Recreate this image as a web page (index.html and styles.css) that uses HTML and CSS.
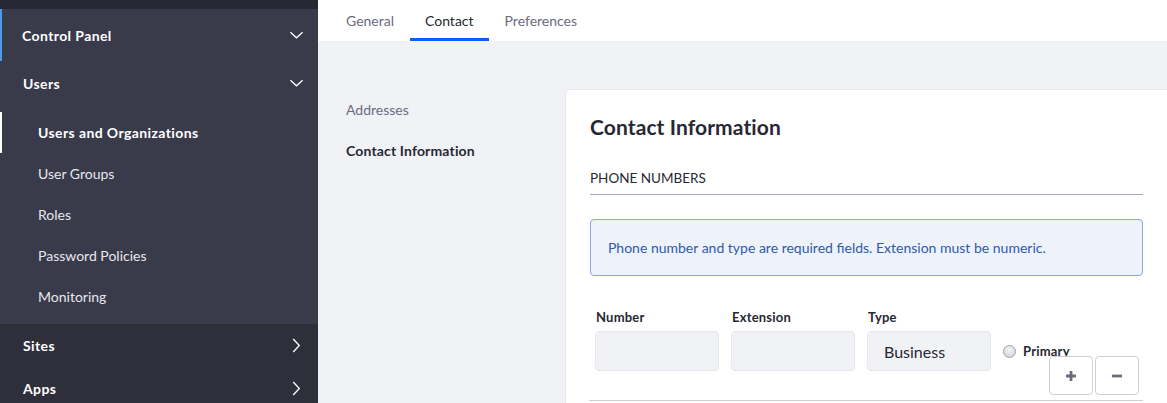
FILE: index.html
```html
<!DOCTYPE html>
<html lang="en">
<head>
<meta charset="utf-8">
<title>Contact</title>
<link rel="stylesheet" href="styles.css">
</head>
<body>
<aside class="sidebar">
  <div class="topstrip"></div>
  <div class="panel">
    <div class="row row-main active-blue"><span>Control Panel</span>
      <svg class="chev" viewBox="0 0 16 16"><polyline points="1.5,4.5 8,10.5 14.5,4.5"/></svg></div>
    <div class="row row-sec"><span>Users</span>
      <svg class="chev" viewBox="0 0 16 16"><polyline points="1.5,4.5 8,10.5 14.5,4.5"/></svg></div>
    <ul class="sublist">
      <li class="sub active">Users and Organizations</li>
      <li class="sub">User Groups</li>
      <li class="sub">Roles</li>
      <li class="sub">Password Policies</li>
      <li class="sub">Monitoring</li>
    </ul>
  </div>
  <div class="row row-sec dark"><span>Sites</span>
    <svg class="chev-r" viewBox="0 0 16 16"><polyline points="4.5,1 11,8 4.5,15"/></svg></div>
  <div class="row row-sec dark"><span>Apps</span>
    <svg class="chev-r" viewBox="0 0 16 16"><polyline points="4.5,1 11,8 4.5,15"/></svg></div>
</aside>
<main class="main">
  <nav class="tabs">
    <a class="tab">General</a>
    <a class="tab active">Contact</a>
    <a class="tab">Preferences</a>
  </nav>
  <div class="content">
    <ul class="sidenav">
      <li class="nav-item">Addresses</li>
      <li class="nav-item current">Contact Information</li>
    </ul>
    <section class="card">
      <h2 class="card-title">Contact Information</h2>
      <div class="legend">PHONE NUMBERS</div>
      <div class="alert">Phone number and type are required fields. Extension must be numeric.</div>
      <div class="phone-row">
        <div class="field">
          <label class="label">Number</label>
          <div class="input"></div>
        </div>
        <div class="field">
          <label class="label">Extension</label>
          <div class="input"></div>
        </div>
        <div class="field">
          <label class="label">Type</label>
          <div class="input select">Business</div>
        </div>
        <div class="primary"><span class="radio"></span><span class="primary-label">Primary</span></div>
        <div class="btns">
          <button class="btn">
            <svg viewBox="0 0 12 12"><path d="M6 1v10M1 6h10"/></svg>
          </button>
          <button class="btn">
            <svg viewBox="0 0 12 12"><path d="M1 6h10"/></svg>
          </button>
        </div>
      </div>
    </section>
  </div>
</main>
</body>
</html>
```
FILE: styles.css
```css
* { box-sizing: border-box; }
html, body { margin: 0; padding: 0; }
body {
  display: flex;
  width: 1167px;
  height: 403px;
  overflow: hidden;
  font-family: Lato, "Liberation Sans", sans-serif;
  font-size: 14px;
  color: #272833;
  background: #f1f2f5;
}
ul { list-style: none; margin: 0; padding: 0; }

/* Sidebar */
.sidebar {
  width: 318px;
  flex: 0 0 318px;
  background: #2e2f3b;
  color: #fff;
}
.topstrip { height: 9px; background: #272833; }
.panel { background: #393a4a; }
.row {
  display: flex;
  align-items: center;
  justify-content: space-between;
  padding: 0 14px 0 23px;
  font-weight: 700;
  font-size: 14px;
  letter-spacing: 0.4px;
  color: #fff;
}
.row-main { height: 52px; padding-left: 22px; }
.row-sec { height: 44px; }
.dark { height: 43px; }
.active-blue { box-shadow: inset 2px 0 0 #4b9bea; }
.chev { width: 15px; height: 15px; fill: none; stroke: #fff; stroke-width: 1.4; }
.chev-r { width: 15px; height: 15px; fill: none; stroke: #fff; stroke-width: 1.4; }
.sublist { padding: 7px 0 7px; }
.sub {
  height: 41px;
  display: flex;
  align-items: center;
  padding-left: 38px;
  color: #e7e7ed;
  font-size: 14px;
}
.sub.active { font-weight: 700; color: #fff; letter-spacing: 0.4px; box-shadow: inset 2px 0 0 #fff; }

/* Main */
.main { flex: 1; display: flex; flex-direction: column; min-width: 0; }
.tabs {
  height: 41px;
  background: #fff;
  display: flex;
  padding-left: 13px;
  gap: 1px;
}
.tab {
  padding: 0 15px;
  display: flex;
  align-items: center;
  height: 41px;
  color: #6b6c7e;
  font-size: 14px;
  padding-bottom: 1px;
}
.tab.active { color: #272833; box-shadow: inset 0 -3px 0 #0b5fff; }

.content {
  display: flex;
  margin-top: 48px;
  flex: 1;
}
.sidenav { width: 247px; flex: 0 0 247px; padding: 0 0 0 28px; }
.nav-item { height: 41px; display: flex; align-items: center; color: #6b6c7e; font-size: 14px; }
.nav-item.current { color: #272833; font-weight: 700; letter-spacing: 0.15px; }

.card {
  flex: 1;
  background: #fff;
  border-top: 1px solid #e7e7ed;
  border-left: 1px solid #e7e7ed;
  border-top-left-radius: 5px;
  padding: 25px 24px 0 24px;
}
.card-title { margin: 0; font-size: 21px; line-height: 24px; font-weight: 700; letter-spacing: 0.1px; color: #272833; }
.legend {
  margin-top: 29px;
  font-size: 13.5px;
  line-height: 20px;
  padding-bottom: 6px;
  border-bottom: 1px solid #a7a9bc;
  color: #272833;
}
.alert {
  margin-top: 24px;
  background: #eef2fa;
  border: 1px solid #89a7e0;
  border-radius: 4px;
  padding: 17px 17px;
  line-height: 21px;
  color: #2e5aac;
  font-size: 14px;
}
.phone-row {
  position: relative;
  display: flex;
  align-items: flex-end;
  gap: 12px;
  margin-top: 32px;
  margin-left: -1px;
  padding: 0 0 29px 6px;
  border-bottom: 1px solid #cdced9;
}
.field { width: 124px; display: flex; flex-direction: column; }
.label { font-size: 13px; line-height: 18px; font-weight: 700; letter-spacing: 0.2px; color: #272833; margin: 0 0 5px 1px; }
.input {
  height: 40px;
  background: #f1f2f5;
  border: 1px solid #e7e7ed;
  border-radius: 4px;
}
.select { display: flex; align-items: center; padding-left: 16px; font-size: 16px; color: #272833; }
.primary { display: flex; align-items: center; height: 40px; margin-left: 0; }
.radio {
  width: 13px; height: 13px; border-radius: 50%;
  border: 1px solid #a0a0a8;
  background: radial-gradient(circle at 50% 35%, #f4f4f4, #d0d0d4);
  margin-right: 7px;
}
.primary-label { font-size: 13px; font-weight: 700; letter-spacing: 0.2px; color: #272833; }
.btns { position: absolute; right: 4px; bottom: 5px; display: flex; gap: 2px; }
.btn {
  width: 44px; height: 39px;
  background: #fff;
  border: 1px solid #cdced9;
  border-radius: 4px;
  display: flex; align-items: center; justify-content: center;
  padding: 0;
}
.btn svg { width: 12px; height: 12px; fill: none; stroke: #6b6c7e; stroke-width: 2.8; }
```
